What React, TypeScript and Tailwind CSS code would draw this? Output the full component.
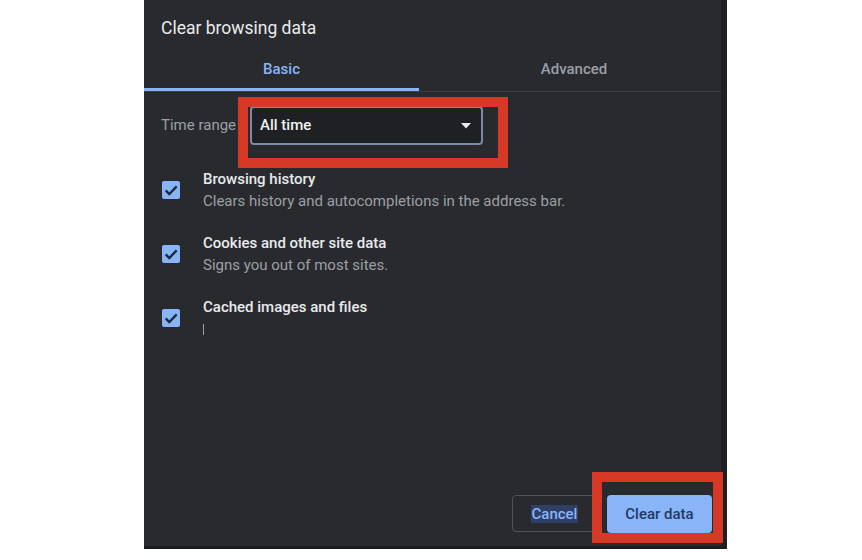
import React from "react";

function Check() {
  return (
    <div className="w-[18px] h-[18px] rounded-[2px] bg-[#8ab4f8] flex items-center justify-center shrink-0">
      <svg width="16" height="16" viewBox="0 0 24 24">
        <path d="M4 12.5l5.5 5.5L20.5 6.5" fill="none" stroke="#1b2a44" strokeWidth="3.6" />
      </svg>
    </div>
  );
}

function Item({ title, sub, cursor }: { title: string; sub?: string; cursor?: boolean }) {
  return (
    <div className="flex items-center pl-[18px] h-[44px]">
      <Check />
      <div className="ml-[23px] flex flex-col text-[15px] leading-[22px]">
        <span className="text-[#e8eaed] font-medium">{title}</span>
        {sub ? (
          <span className="text-[#9aa0a6]">{sub}</span>
        ) : cursor ? (
          <span className="h-[22px] flex items-center">
            <span className="w-[1px] h-[11px] bg-[#9aa0a6]" />
          </span>
        ) : null}
      </div>
    </div>
  );
}

export default function App() {
  return (
    <div className="w-[862px] h-[560px] bg-white flex font-['Roboto','Liberation_Sans',sans-serif]">
      <div className="ml-[144px] w-[583px] h-[549px] bg-[#292a2d] border-r-[6px] border-r-[#1f2023] border-b-[3px] border-b-[#1c1d1f] relative flex flex-col">
        <div className="pl-[17px] pt-[18px] h-[48px] text-[17.5px] leading-[20px] text-[#e8eaed]">
          Clear browsing data
        </div>
        <div className="flex h-[44px] border-b border-[#3c3d41]">
          <div className="w-[275px] relative flex items-center justify-center text-[15px] font-medium text-[#8ab4f8]">
            Basic
            <div className="absolute left-0 right-0 bottom-0 h-[3px] bg-[#8ab4f8]" />
          </div>
          <div className="flex-1 flex items-center justify-center text-[15px] font-medium text-[#9aa0a6] pl-[8px]">
            Advanced
          </div>
        </div>
        <div className="flex items-center pl-[17px] mt-[14px] gap-[14px]">
          <span className="w-[75px] whitespace-nowrap text-[15px] text-[#9aa0a6]">Time range</span>
          <div className="w-[233px] h-[39px] rounded-[4px] border-2 border-[#7e89a5] bg-[#1f2023] flex items-center justify-between pl-[8px] pr-[10px]">
            <span className="text-[15px] font-medium text-[#f1f3f4]">All time</span>
            <svg width="10" height="6" viewBox="0 0 10 6">
              <path d="M0 0h10L5 5.5z" fill="#e8eaed" />
            </svg>
          </div>
        </div>
        <div className="flex flex-col gap-[20px] mt-[23px]">
          <Item title="Browsing history" sub="Clears history and autocompletions in the address bar." />
          <Item title="Cookies and other site data" sub="Signs you out of most sites." />
          <Item title="Cached images and files" cursor />
        </div>
        <div className="mt-auto mb-[13px] flex justify-end gap-[10px] pr-[9px]">
          <button className="w-[85px] h-[37px] rounded-[4px] border border-[#4f5256] flex items-center justify-center">
            <span className="text-[15px] font-medium text-[#8ab4f8] bg-[#2e4068] leading-[18px] px-[1px]">Cancel</span>
          </button>
          <button className="w-[105px] h-[38px] rounded-[4px] bg-[#8ab4f8] flex items-center justify-center text-[15px] font-medium text-[#233a62]">
            Clear data
          </button>
        </div>

        <div className="absolute left-[94px] top-[97px] w-[270px] h-[71px] border-[10px] border-[#d63a26]" />
        <div className="absolute left-[448px] top-[472px] w-[131px] h-[71px] border-[10px] border-[#d63a26]" />
      </div>
    </div>
  );
}
